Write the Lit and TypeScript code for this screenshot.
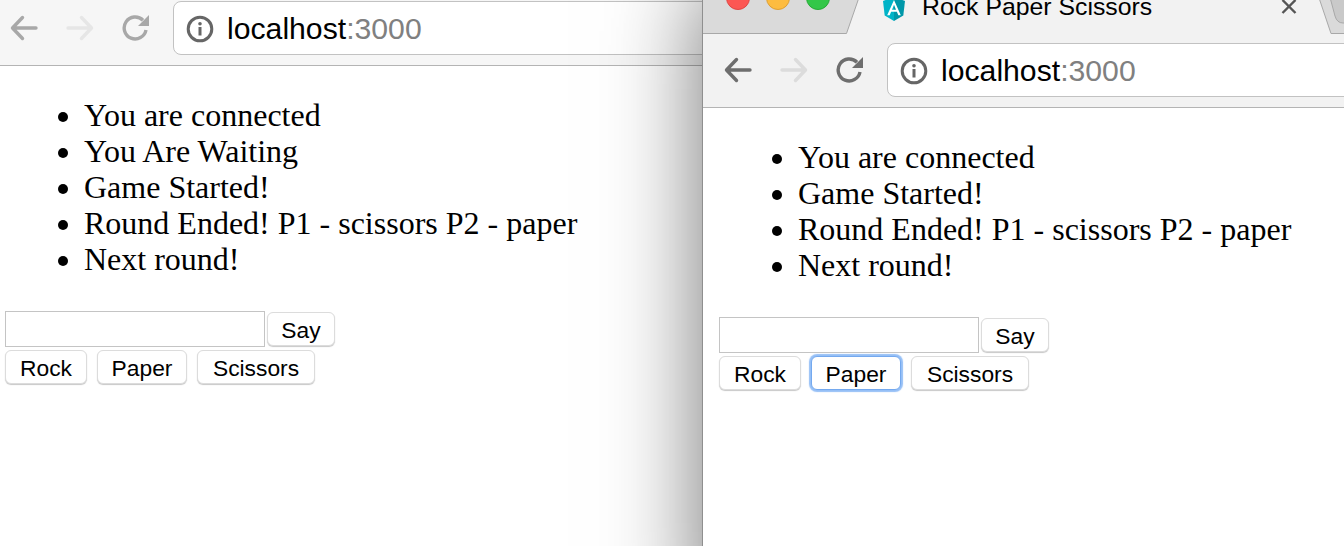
import { LitElement, html, css, svg } from "lit";
import { customElement, property } from "lit/decorators.js";

@customElement("browser-window")
class BrowserWindow extends LitElement {
  @property({ type: Array }) lines: string[] = [];
  @property({ type: Boolean, reflect: true }) inactive = false;
  @property() focused = "";

  static styles = css`
    :host {
      display: flex;
      flex-direction: column;
      height: 100%;
      background: #fff;
      --chrome: #f2f2f2;
      --icon: #6e6e6e;
      --icon-off: #dcdcdc;
      font-family: "Liberation Sans", Arial, sans-serif;
      color: #000;
    }
    :host([inactive]) {
      --chrome: #f6f6f6;
      --icon: #a8a8a8;
      --icon-off: #e6e6e6;
    }
    .strip {
      height: 48px;
      flex: none;
      display: flex;
      align-items: flex-start;
      padding-left: 23px;
      position: relative;
      overflow: hidden;
      background: #dadada;
    }
    .strip-art {
      position: absolute;
      left: 0;
      top: 0;
    }
    .light {
      position: relative;
      width: 24px;
      height: 24px;
      border-radius: 50%;
      margin-right: 16px;
      box-sizing: border-box;
    }
    .red { background: #fc5753; border: 1px solid #df4744; }
    .yellow { background: #fdbc40; border: 1px solid #de9f34; }
    .green { background: #33c748; border: 1px solid #27aa35; }
    .logo {
      position: relative;
      margin: 11px 0 0 37px;
      width: 22px;
      height: 24px;
    }
    .title {
      position: relative;
      margin: 6px 0 0 17px;
      font-size: 24.8px;
      line-height: 30px;
      white-space: nowrap;
      width: 231px;
    }
    .close {
      position: relative;
      margin: 13px 0 0 128px;
    }
    .toolbar {
      height: 72px;
      padding-bottom: 1px;
      flex: none;
      background: var(--chrome);
      border-bottom: 1px solid #b4b4b4;
      display: flex;
      align-items: center;
      padding-left: 21px;
      gap: 28px;
    }
    .toolbar svg { flex: none; display: block; }
    .url {
      flex: 1;
      height: 54px;
      box-sizing: border-box;
      margin-left: -5px;
      padding-top: 1px;
      background: #fff;
      border: 1px solid #c2c2c2;
      border-radius: 8px 0 0 8px;
      display: flex;
      align-items: center;
      padding-left: 12px;
      gap: 13px;
      font-size: 30.2px;
      white-space: nowrap;
    }
    .port { color: #808080; }
    .page {
      padding: 0 16px;
      flex: 1;
    }
    ul {
      margin: 31px 0 34px;
      padding-left: 79px;
      font-family: "Liberation Serif", "Times New Roman", serif;
      font-size: 32px;
      line-height: 36px;
    }
    .row {
      display: flex;
      align-items: center;
      gap: 2px;
    }
    .row + .row {
      gap: 10px;
      margin-top: 3px;
    }
    .field {
      width: 260px;
      height: 36px;
      box-sizing: border-box;
      border: 1px solid #c4c4c4;
      background: #fff;
      padding: 0;
      margin: 0;
      outline: none;
    }
    button {
      height: 34px;
      box-sizing: border-box;
      padding: 2px 0 0;
      margin: 0;
      font: 22.8px/30px "Liberation Sans", Arial, sans-serif;
      text-align: center;
      color: #000;
      background: #fff;
      border: 1px solid #dcdcdc;
      border-radius: 6px;
      box-shadow: 0 1px 1px rgba(0, 0, 0, 0.22);
    }
    .say { width: 68px; }
    .rock { width: 82px; }
    .paper { width: 90px; }
    .scissors { width: 118px; }
    button.on {
      border-color: #74a9ef;
      box-shadow: 0 0 1px 2px rgba(130, 180, 245, 0.85);
    }
  `;

  private icons() {
    return html`
      <svg width="28" height="26" viewBox="0 0 28 26" fill="none" stroke="var(--icon)" stroke-width="3.4" stroke-linecap="round" stroke-linejoin="round">
        <path d="M26 13H3M12.5 2.5 2.5 13l10 10.5" />
      </svg>
      <svg width="28" height="26" viewBox="0 0 28 26" fill="none" stroke="var(--icon-off)" stroke-width="3.4" stroke-linecap="round" stroke-linejoin="round">
        <path d="M2 13h23M15.5 2.5 25.5 13l-10 10.5" />
      </svg>
      <svg width="28" height="26" viewBox="0 0 28 26" fill="none">
        <path d="M21 5.2A11 11 0 1 0 24 15" stroke="var(--icon)" stroke-width="3.4" />
        <path d="M27 0v11H16z" fill="var(--icon)" />
      </svg>
    `;
  }

  render() {
    const art = svg`
      <path d="M160 0 L143.500 47.500 H0 V48 H2000 V0 Z" fill="#f2f2f2" />
      <path d="M160 0 L143.500 47.500 H0" fill="none" stroke="#a8a8a8" stroke-width="1" />
      <path d="M612 0 L628 47.500 H800 V0 Z" fill="#dadada" />
      <path d="M612 0 L628 47.500 H800" fill="none" stroke="#a8a8a8" stroke-width="1" />
      <path d="M624 0 L632 30 Q634 37 640 37 H800 V0 Z" fill="#c9c9c9" stroke="#a8a8a8" stroke-width="1" />
    `;
    return html`
      <div class="strip">
        <svg class="strip-art" width="800" height="48" viewBox="0 0 800 48">${art}</svg>
        <div class="light red"></div>
        <div class="light yellow"></div>
        <div class="light green"></div>
        <svg class="logo" viewBox="0 0 22 24">
          <path d="M11 0 0 3.900 1.700 18.400 11 24z" fill="#00b3c7" />
          <path d="M11 0 22 3.900 20.300 18.400 11 24z" fill="#0097a9" />
          <path d="M11 3 4.200 18.200H6.700L8.100 14.700H13.900L15.300 18.200H17.800zM9 12.700 11 7.800 13 12.700z" fill="#fff" />
        </svg>
        <div class="title">Rock Paper Scissors</div>
        <svg class="close" width="16" height="16" viewBox="0 0 16 16" stroke="#555" stroke-width="2.400">
          <path d="M1.500 1 14.500 14M14.500 1 1.500 14" />
        </svg>
      </div>
      <div class="toolbar">
        ${this.icons()}
        <div class="url">
          <svg width="28" height="28" viewBox="0 0 28 28" fill="none">
            <circle cx="14" cy="14" r="11.800" stroke="#666" stroke-width="3" />
            <rect x="12.500" y="12" width="3" height="8.500" fill="#666" />
            <circle cx="14" cy="8.800" r="1.800" fill="#666" />
          </svg>
          <span>localhost<span class="port">:3000</span></span>
        </div>
      </div>
      <div class="page">
        <ul>
          ${this.lines.map((l) => html`<li>${l}</li>`)}
        </ul>
        <div class="row">
          <input class="field" />
          <button class="say">Say</button>
        </div>
        <div class="row">
          ${["Rock", "Paper", "Scissors"].map(
            (b) => html`<button class="${b.toLowerCase()} ${this.focused === b ? "on" : ""}">${b}</button>`
          )}
        </div>
      </div>
    `;
  }
}

@customElement("app-root")
class AppRoot extends LitElement {
  static styles = css`
    :host {
      display: block;
      position: relative;
      width: 1344px;
      height: 546px;
      overflow: hidden;
      background: #fff;
    }
    .win {
      position: absolute;
    }
    .back {
      left: -11px;
      top: -56px;
      width: 800px;
      height: 640px;
    }
    .front {
      left: 702px;
      top: -14px;
      width: 760px;
      height: 640px;
      border-left: 1px solid #8f8f8f;
      box-shadow: 0 0 90px rgba(0, 0, 0, 0.55);
    }
  `;
  render() {
    return html`
      <browser-window
        class="win back"
        inactive
        .lines=${["You are connected", "You Are Waiting", "Game Started!", "Round Ended! P1 - scissors P2 - paper", "Next round!"]}
      ></browser-window>
      <browser-window
        class="win front"
        focused="Paper"
        .lines=${["You are connected", "Game Started!", "Round Ended! P1 - scissors P2 - paper", "Next round!"]}
      ></browser-window>
    `;
  }
}
